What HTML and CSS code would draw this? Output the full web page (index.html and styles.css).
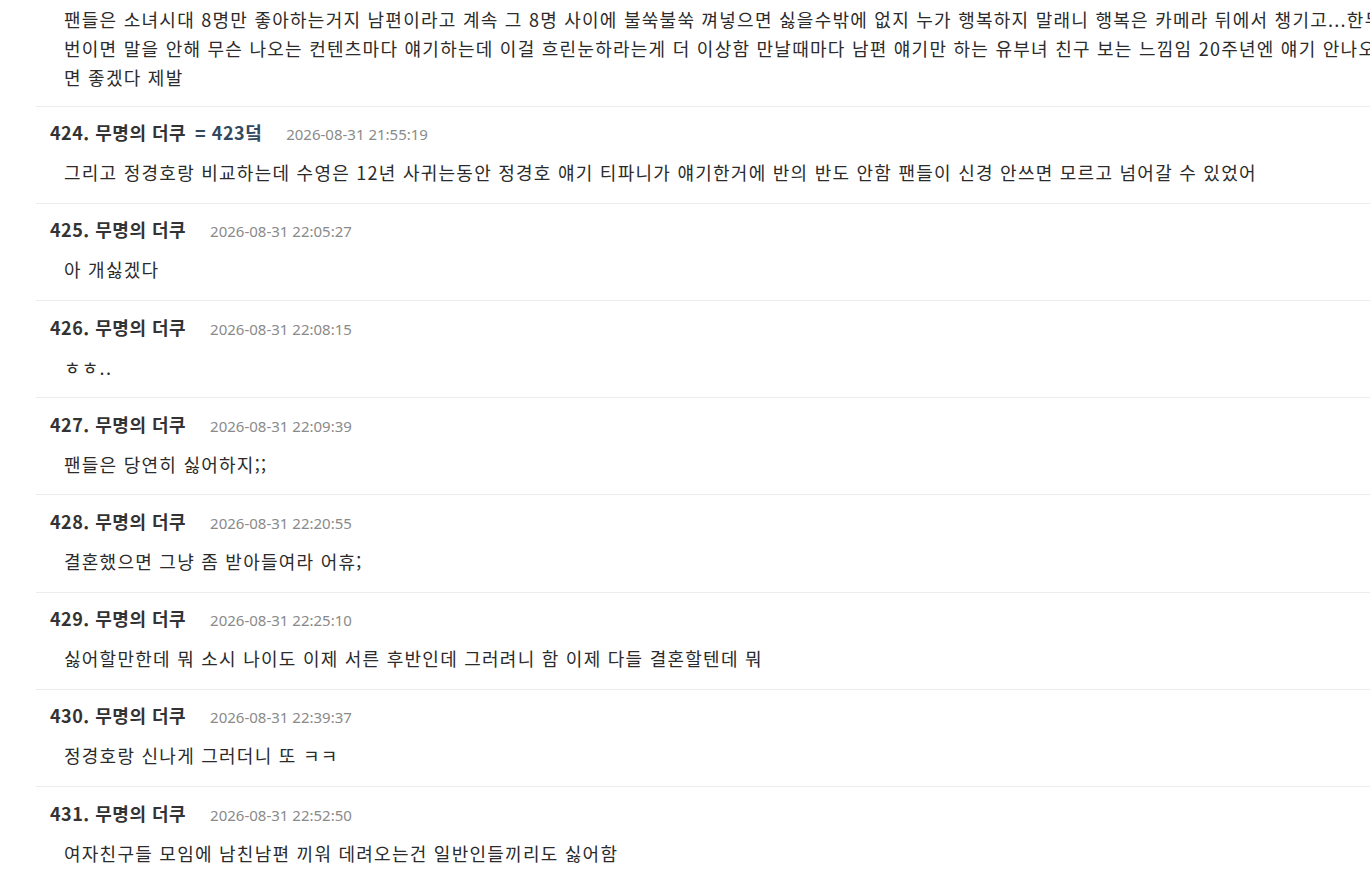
FILE: index.html
```html
<!DOCTYPE html>
<html lang="ko">
<head>
<meta charset="utf-8">
<title>댓글</title>
<link rel="stylesheet" href="styles.css">
</head>
<body>
<div class="page">
  <ul class="comments">
    <li class="comment comment-partial">
      <p class="body">팬들은 소녀시대 8명만 좋아하는거지 남편이라고 계속 그 8명 사이에 불쑥불쑥 껴넣으면 싫을수밖에 없지 누가 행복하지 말래니 행복은 카메라 뒤에서 챙기고...한두번이면 말을 안해 무슨 나오는 컨텐츠마다 얘기하는데 이걸 흐린눈하라는게 더 이상함 만날때마다 남편 얘기만 하는 유부녀 친구 보는 느낌임 20주년엔 얘기 안나오면 좋겠다 제발</p>
    </li>
    <li class="comment">
      <div class="head"><span class="name">424. 무명의 더쿠</span> <span class="ref">= 423덬</span><span class="date">2026-08-31 21:55:19</span></div>
      <p class="body">그리고 정경호랑 비교하는데 수영은 12년 사귀는동안 정경호 얘기 티파니가 얘기한거에 반의 반도 안함 팬들이 신경 안쓰면 모르고 넘어갈 수 있었어</p>
    </li>
    <li class="comment">
      <div class="head"><span class="name">425. 무명의 더쿠</span><span class="date">2026-08-31 22:05:27</span></div>
      <p class="body">아 개싫겠다</p>
    </li>
    <li class="comment">
      <div class="head"><span class="name">426. 무명의 더쿠</span><span class="date">2026-08-31 22:08:15</span></div>
      <p class="body">ㅎㅎ..</p>
    </li>
    <li class="comment">
      <div class="head"><span class="name">427. 무명의 더쿠</span><span class="date">2026-08-31 22:09:39</span></div>
      <p class="body">팬들은 당연히 싫어하지;;</p>
    </li>
    <li class="comment">
      <div class="head"><span class="name">428. 무명의 더쿠</span><span class="date">2026-08-31 22:20:55</span></div>
      <p class="body">결혼했으면 그냥 좀 받아들여라 어휴;</p>
    </li>
    <li class="comment">
      <div class="head"><span class="name">429. 무명의 더쿠</span><span class="date">2026-08-31 22:25:10</span></div>
      <p class="body">싫어할만한데 뭐 소시 나이도 이제 서른 후반인데 그러려니 함 이제 다들 결혼할텐데 뭐</p>
    </li>
    <li class="comment">
      <div class="head"><span class="name">430. 무명의 더쿠</span><span class="date">2026-08-31 22:39:37</span></div>
      <p class="body">정경호랑 신나게 그러더니 또 ㅋㅋ</p>
    </li>
    <li class="comment">
      <div class="head"><span class="name">431. 무명의 더쿠</span><span class="date">2026-08-31 22:52:50</span></div>
      <p class="body">여자친구들 모임에 남친남편 끼워 데려오는건 일반인들끼리도 싫어함</p>
    </li>
  </ul>
</div>
</body>
</html>
```

FILE: styles.css
```css
html, body {
  margin: 0;
  padding: 0;
  background: #fff;
  overflow: hidden;
}

body {
  font-family: "Noto Sans CJK KR", "Noto Sans", sans-serif;
  color: #333;
}

.page {
  width: 1356px;
  padding-left: 36px;
}

.comments {
  list-style: none;
  margin: 0;
  padding: 0;
}

.comment {
  border-top: 1px solid #ececec;
  padding: 11.5px 0 15.69px 14px;
}

.comment-partial {
  border-top: 0;
  padding-top: 4.5px;
  padding-bottom: 14.2px;
}

.head {
  display: flex;
  align-items: baseline;
  height: 28px;
  line-height: 28px;
  font-size: 18px;
  letter-spacing: 0.5px;
}

.name {
  font-weight: 700;
  color: #333;
}

.ref {
  font-weight: 700;
  color: #34495e;
  margin-left: 9px;
}

.date {
  font-family: "Noto Sans", "Noto Sans CJK KR", sans-serif;
  font-size: 15px;
  letter-spacing: 0;
  color: #8a8a8a;
  margin-left: 24px;
}

.body {
  margin: 12px 0 0;
  padding-left: 14px;
  font-size: 18px;
  letter-spacing: 1.25px;
  line-height: 29px;
  color: #2b2b2b;
}

.comment-partial .body {
  margin-top: 0;
}
```
